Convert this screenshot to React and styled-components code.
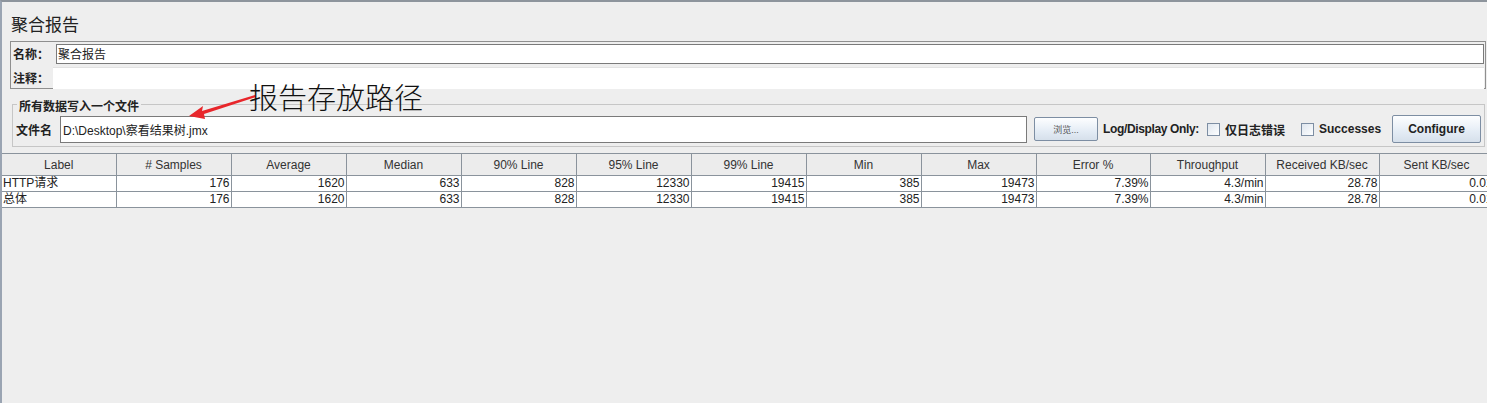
import React from 'react'
import styled, { createGlobalStyle } from 'styled-components'

const GlobalStyle = createGlobalStyle`
    html, body { margin:0; padding:0; background:#eeeeee; }
    body {
        font-family:"Liberation Sans","Noto Sans CJK SC",sans-serif;
        font-size:12px;
        color:#333;
    }
`

const columns = [
    { key:'label', title:'Label', width:114 },
    { key:'samples', title:'# Samples', width:115 },
    { key:'avg', title:'Average', width:115 },
    { key:'median', title:'Median', width:115 },
    { key:'p90', title:'90% Line', width:115 },
    { key:'p95', title:'95% Line', width:115 },
    { key:'p99', title:'99% Line', width:115 },
    { key:'min', title:'Min', width:115 },
    { key:'max', title:'Max', width:115 },
    { key:'err', title:'Error %', width:114 },
    { key:'tp', title:'Throughput', width:115 },
    { key:'recv', title:'Received KB/sec', width:114 },
    { key:'sent', title:'Sent KB/sec', width:115 },
]

const rows = [
    { label:'HTTP请求', samples:176, avg:1620, median:633, p90:828, p95:12330, p99:19415, min:385, max:19473, err:'7.39%', tp:'4.3/min', recv:'28.78', sent:'0.01' },
    { label:'总体', samples:176, avg:1620, median:633, p90:828, p95:12330, p99:19415, min:385, max:19473, err:'7.39%', tp:'4.3/min', recv:'28.78', sent:'0.01' },
]

function App() {
    return (
        <>
            <GlobalStyle />
            <Page>
                <Title>聚合报告</Title>
                <NamePanel>
                    <FieldRow>
                        <FieldLabel>名称：</FieldLabel>
                        <TextInput value="聚合报告" readOnly />
                    </FieldRow>
                    <FieldRow>
                        <FieldLabel>注释：</FieldLabel>
                        <CommentArea />
                    </FieldRow>
                </NamePanel>

                <FilePanel>
                    <Legend>所有数据写入一个文件</Legend>
                    <FileRow>
                        <FieldLabel>文件名</FieldLabel>
                        <FileInput value="D:\Desktop\察看结果树.jmx" readOnly />
                        <BrowseButton>浏览...</BrowseButton>
                        <BoldText tight>Log/Display Only:</BoldText>
                        <CheckItem gap={8}><Box /><BoldText>仅日志错误</BoldText></CheckItem>
                        <CheckItem gap={16}><Box /><BoldText>Successes</BoldText></CheckItem>
                        <ConfigureButton>Configure</ConfigureButton>
                    </FileRow>
                    <Note>
                        <svg width="70" height="30" viewBox="0 0 70 30">
                            <path d="M0 25 L14 15 L13 20 L66 4 L67 6 L15 23 L16 28 Z" fill="#e8262b" />
                        </svg>
                        <NoteText>报告存放路径</NoteText>
                    </Note>
                </FilePanel>

                <TableWrap>
                    <Table>
                        <colgroup>
                            {columns.map(c => <col key={c.key} style={{ width:c.width }} />)}
                        </colgroup>
                        <thead>
                            <tr>
                                {columns.map(c => <HeadCell key={c.key}>{c.title}</HeadCell>)}
                            </tr>
                        </thead>
                        <tbody>
                            {rows.map((r, i) => (
                                <tr key={i}>
                                    {columns.map(c => (
                                        <Cell key={c.key} left={c.key === 'label'}>{r[c.key]}</Cell>
                                    ))}
                                </tr>
                            ))}
                        </tbody>
                    </Table>
                </TableWrap>
            </Page>
        </>
    )
}

export default App

const Page = styled.div`
    width:1487px;
    height:403px;
    box-sizing:border-box;
    border-top:2px solid #8d949c;
    border-left:2px solid #9aa4b2;
    background:#eeeeee;
    overflow:hidden;
    display:flex;
    flex-direction:column;
`
const Title = styled.div`
    font-size:17px;
    color:#222;
    padding:12px 0 0 9px;
    height:25px;
    line-height:24px;
`
const NamePanel = styled.div`
    margin:2px 0 0 8px;
    width:1476px;
    box-sizing:border-box;
    border:1px solid #8f8f8f;
    display:flex;
    flex-direction:column;
    padding:1px 1px 0 2px;
    gap:3px;
`
const FieldRow = styled.div`
    display:flex;
    align-items:center;
    height:21px;
`
const FieldLabel = styled.span`
    font-weight:bold;
    color:#222;
    font-size:12px;
    white-space:nowrap;
    margin-right:4px;
`
const TextInput = styled.input`
    flex:1;
    height:20px;
    box-sizing:border-box;
    border:1px solid #7a7a7a;
    background:#fff;
    font-family:inherit;
    font-size:12px;
    color:#222;
    padding:0 1px;
    outline:none;
    margin-left:3px;
`
const CommentArea = styled.div`
    flex:1;
    height:21px;
    background:#fff;
    border-top:1px solid #e2e2e2;
`
const FilePanel = styled.div`
    position:relative;
    margin:15px 0 0 10px;
    width:1473px;
    box-sizing:border-box;
    border:1px solid #c6c6c6;
    padding:10px 3px 3px 3px;
`
const Legend = styled.div`
    position:absolute;
    top:-8px;
    left:4px;
    padding:0 2px;
    background:#eeeeee;
    font-weight:bold;
    color:#222;
`
const FileRow = styled.div`
    display:flex;
    align-items:center;
    height:28px;
`
const FileInput = styled(TextInput)`
    flex:none;
    width:967px;
    height:27px;
    margin-left:4px;
    padding-left:2px;
`
const ButtonBase = styled.button`
    font-family:inherit;
    box-sizing:border-box;
    border:1px solid #7d8ea3;
    border-radius:2px;
    background:linear-gradient(#fdfeff, #e4ecf5 60%, #d6e0eb);
    color:#222;
    padding:0;
`
const BrowseButton = styled(ButtonBase)`
    width:64px;
    height:24px;
    margin:0 5px 0 7px;
    font-size:9px;
    color:#555;
`
const ConfigureButton = styled(ButtonBase)`
    width:89px;
    height:28px;
    font-weight:bold;
    font-size:12px;
    margin-left:11px;
`
const BoldText = styled.span`
    font-weight:bold;
    color:#222;
    white-space:nowrap;
    letter-spacing:${props => props.tight ? '-0.35px' : '0'};
`
const CheckItem = styled.label`
    display:flex;
    align-items:center;
    gap:5px;
    margin-left:${props => props.gap}px;
`
const Box = styled.span`
    width:11px;
    height:11px;
    border:1px solid #7d8ea3;
    background:linear-gradient(135deg, #dfe6ee, #fdfeff);
`
const Note = styled.div`
    position:absolute;
    top:-14px;
    left:176px;
    display:flex;
    align-items:flex-start;
    pointer-events:none;
`
const NoteText = styled.div`
    font-family:"Noto Sans CJK SC",sans-serif;
    font-size:29px;
    line-height:34px;
    color:#111;
    margin-left:-10px;
    margin-top:-12px;
    font-weight:300;
`
const TableWrap = styled.div`
    margin-top:6px;
    width:1485px;
    overflow:hidden;
    border-top:1px solid #8a939c;
`
const Table = styled.table`
    border-collapse:collapse;
    table-layout:fixed;
    width:1492px;
`
const HeadCell = styled.th`
    height:21px;
    padding:0;
    font-weight:normal;
    text-align:center;
    color:#333;
    background:#ececec;
    border-right:1px solid #8a939c;
    border-bottom:1px solid #8a939c;
    white-space:nowrap;
    overflow:hidden;
`
const Cell = styled.td`
    height:15px;
    padding:0 1px;
    background:#fff;
    color:#222;
    line-height:15px;
    text-align:${props => props.left ? 'left' : 'right'};
    border-right:1px solid #8a939c;
    border-bottom:1px solid #8a939c;
    white-space:nowrap;
    overflow:hidden;
`
